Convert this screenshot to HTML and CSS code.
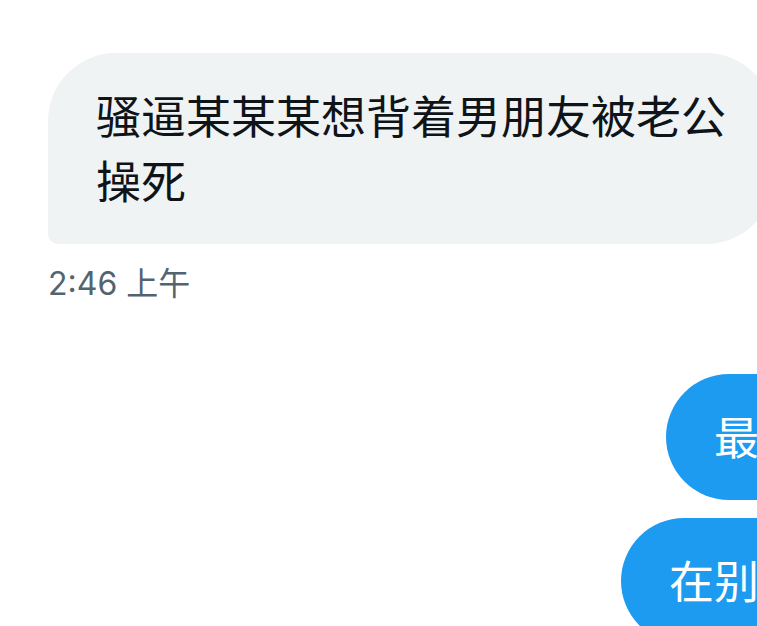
FILE: index.html
```
<!DOCTYPE html>
<html lang="zh-CN">
<head>
<meta charset="utf-8">
<meta name="viewport" content="width=device-width, initial-scale=1">
<title>私信</title>
<link rel="stylesheet" href="styles.css">
</head>
<body>
<main class="conversation">
  <article class="message received">
    <p class="bubble">骚逼某某某想背着男朋友被老公<br>操死</p>
    <time class="time" datetime="02:46">2:46 上午</time>
  </article>
  <article class="message sent">
    <p class="bubble">最</p>
    <p class="bubble">在别</p>
  </article>
</main>
</body>
</html>
```
FILE: styles.css
```
* {
  box-sizing: border-box;
}

body {
  margin: 0;
  min-height: 100vh;
  overflow: hidden;
  background: #fff;
  font-family: Inter, "Noto Sans CJK SC", sans-serif;
}

.conversation {
  display: flex;
  flex-direction: column;
  gap: 68px;
  margin-right: -50px;
  padding: 53px 0 0 48px;
}

.message {
  display: flex;
  flex-direction: column;
}

.received {
  align-items: flex-start;
}

.sent {
  align-items: flex-end;
  gap: 18px;
}

.bubble {
  margin: 0;
  padding: 32px 48px 29px;
  border-radius: 68px;
  font-size: 45px;
  line-height: 65px;
  white-space: nowrap;
}

.received .bubble {
  border-bottom-left-radius: 10px;
  background: #eff3f4;
  color: #0f1419;
}

.sent .bubble {
  border-radius: 63px 0 0 63px;
  background: #1d9bf0;
  color: #fff;
}

.time {
  margin-top: 18px;
  color: #536471;
  font-size: 32px;
  line-height: 44px;
}
```
